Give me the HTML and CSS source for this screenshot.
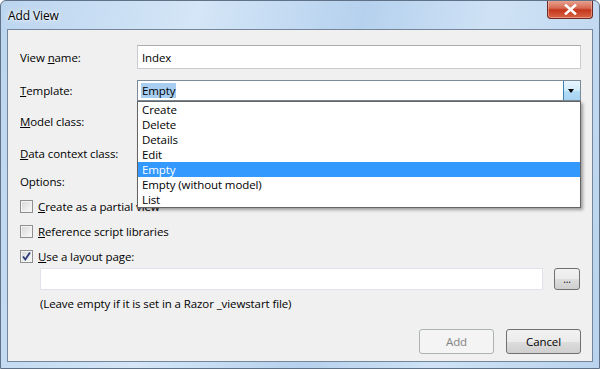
FILE: index.html
```html
<!DOCTYPE html>
<html lang="en">
<head>
    <meta charset="UTF-8">
    <title>Add View</title>
    <link rel="stylesheet" href="styles.css">
</head>
<body>
    <div class="window">
        <div class="titlebar">
            <span class="title">Add View</span>
            <button class="close" type="button">
                <svg width="13" height="11" viewBox="0 0 13 11"><path d="M2 1.5 L11 9.5 M11 1.5 L2 9.5" stroke="#fff" stroke-width="2.6" stroke-linecap="square" fill="none"/></svg>
            </button>
        </div>

        <div class="client">
            <div class="row first">
                <label class="label">View <u>n</u>ame:</label>
                <input class="text" type="text" value="Index">
            </div>

            <!-- Template combo with its open list -->
            <div class="row combo-row">
                <label class="label"><u>T</u>emplate:</label>
                <div class="combo open">
                    <span class="combo-value"><span class="sel">Empty</span></span>
                    <span class="combo-arrow hot"></span>
                    <ul class="dropdown">
                        <li>Create</li>
                        <li>Delete</li>
                        <li>Details</li>
                        <li>Edit</li>
                        <li class="active">Empty</li>
                        <li>Empty (without model)</li>
                        <li>List</li>
                    </ul>
                </div>
            </div>

            <div class="row combo-row">
                <label class="label"><u>M</u>odel class:</label>
                <div class="combo"><span class="combo-value"></span><span class="combo-arrow"></span></div>
            </div>

            <div class="row combo-row">
                <label class="label"><u>D</u>ata context class:</label>
                <div class="combo"><span class="combo-value"></span><span class="combo-arrow"></span></div>
            </div>

            <div class="options">Options:</div>

            <div class="check"><span class="box"></span><span><u>C</u>reate as a partial view</span></div>
            <div class="check"><span class="box"></span><span><u>R</u>eference script libraries</span></div>
            <div class="check">
                <span class="box">
                    <svg width="11" height="11" viewBox="0 0 11 11"><path d="M2 5.5 L4.3 8.5 L9 1.5" stroke="#2b3a78" stroke-width="1.8" fill="none"/></svg>
                </span>
                <span><u>U</u>se a layout page:</span>
            </div>

            <div class="layout-row">
                <input class="text layout-input" type="text">
                <button class="btn browse" type="button">...</button>
            </div>
            <div class="note">(Leave empty if it is set in a Razor _viewstart file)</div>

            <div class="actions">
                <button class="btn" type="button" disabled>Add</button>
                <button class="btn" type="button">Cancel</button>
            </div>
        </div>
    </div>
</body>
</html>
```

FILE: styles.css
```css
body {
    margin: 0;
    padding: 0;
    font-family: "Open Sans", "Noto Sans", sans-serif;
    font-size: 11.5px;
    letter-spacing: -0.1px;
    line-height: 15px;
    color: #000;
    background: #fff;
}
.window {
    width: 600px;
    height: 369px;
    box-sizing: border-box;
    border: 1px solid #5f7288;
    border-radius: 6px 6px 0 0;
    background: linear-gradient(100deg, #bcd5ef 0%, #d4e6f7 30%, #b6d1ee 55%, #cfe2f5 75%, #b9d3ee 100%);
    display: flex;
    flex-direction: column;
    overflow: hidden;
}
.titlebar {
    height: 28px;
    flex: none;
    display: flex;
    align-items: flex-start;
    justify-content: space-between;
    padding: 0 6px 0 7px;
}
.title {
    margin-top: 7px;
    font-size: 12px;
    text-shadow: 0 0 6px #fff, 0 0 3px #fff;
}
.close {
    width: 46px;
    height: 19px;
    margin-top: -1px;
    border: 1px solid #6e2a25;
    border-top: none;
    border-radius: 0 0 4px 4px;
    background: linear-gradient(#e9a897 0%, #d76a52 45%, #c4361d 55%, #d86543 100%);
    box-shadow: inset 0 0 0 1px rgba(255, 200, 190, 0.5);
    padding: 1px 0 0;
    display: flex;
    align-items: center;
    justify-content: center;
}
.client {
    flex: 1;
    min-height: 0;
    margin: 0 6px 6px 6px;
    border: 1px solid #74869a;
    background: #f0f0f0;
    padding: 15px 11px 0 12px;
    position: relative;
}
.row {
    display: flex;
    align-items: center;
}
.label {
    width: 117px;
    flex: none;
}
.text {
    box-sizing: border-box;
    height: 24px;
    flex: 1;
    border: 1px solid #c9cdd2;
    border-top-color: #abadb3;
    background: #fff;
    font-family: inherit;
    font-size: 11.5px;
    letter-spacing: -0.1px;
    padding: 0 4px;
    margin: 0;
}
.combo-row {
    margin-top: 11px;
}
.combo-row + .combo-row {
    margin-top: 10px;
}
.combo-row + .combo-row + .combo-row {
    margin-top: 11px;
}
.combo {
    flex: 1;
    height: 21px;
    box-sizing: border-box;
    border: 1px solid #7a8a99;
    background: #fff;
    display: flex;
    position: relative;
}
.combo-value {
    flex: 1;
    padding: 2px 0 0 4px;
}
.sel {
    background: #a7cdf0;
    padding: 0 1px;
    margin-left: -1px;
}
.combo-arrow {
    width: 16px;
    background: linear-gradient(#f2f2f2, #d8d8d8);
    border-left: 1px solid #8c8c8c;
    position: relative;
}
.combo-arrow.hot {
    background: linear-gradient(#e8f5fd 0%, #d2ecfb 50%, #b3dcf5 51%, #a7d4f2 100%);
    border-left-color: #3c7fb1;
}
.combo-arrow::after {
    content: "";
    position: absolute;
    left: 4px;
    top: 8px;
    border-left: 3.5px solid transparent;
    border-right: 3.5px solid transparent;
    border-top: 4px solid #000;
}
.dropdown {
    position: absolute;
    left: -1px;
    right: -1px;
    top: 20px;
    z-index: 2;
    margin: 0;
    padding: 0;
    list-style: none;
    background: #fff;
    border: 1px solid #646464;
    box-shadow: 2px 2px 3px rgba(0, 0, 0, 0.35);
}
.dropdown li {
    height: 15px;
    line-height: 15px;
    padding-left: 4px;
}
.dropdown li.active {
    background: #3399ff;
    color: #fff;
}
.options {
    margin-top: 10px;
}
.check {
    display: flex;
    align-items: center;
    gap: 5px;
    margin-top: 10px;
    height: 15px;
}
.box {
    width: 11px;
    height: 11px;
    flex: none;
    border: 1px solid #8f8f8f;
    background: linear-gradient(135deg, #d6d6d6, #fbfbfb);
    box-shadow: inset 0 0 0 1px #f4f4f4;
    display: flex;
}
.layout-row {
    display: flex;
    align-items: center;
    gap: 11px;
    margin: 4px 1px 0 20px;
}
.layout-input {
    height: 22px;
    border-color: #e2e3ea;
}
.btn {
    box-sizing: border-box;
    height: 25px;
    width: 75px;
    border: 1px solid #707070;
    border-radius: 3px;
    background: linear-gradient(#f2f2f2 0%, #ebebeb 50%, #dddddd 51%, #cfcfcf 100%);
    font-family: inherit;
    font-size: 11.5px;
    letter-spacing: -0.1px;
    color: #000;
    padding: 0;
}
.btn:disabled {
    border-color: #adb2b5;
    background: #f4f4f4;
    color: #838383;
}
.browse {
    width: 26px;
    height: 22px;
    font-size: 10px;
    line-height: 12px;
}
.note {
    margin: 6px 0 0 20px;
}
.actions {
    display: flex;
    justify-content: flex-end;
    gap: 12px;
    margin-top: 18px;
}
```
